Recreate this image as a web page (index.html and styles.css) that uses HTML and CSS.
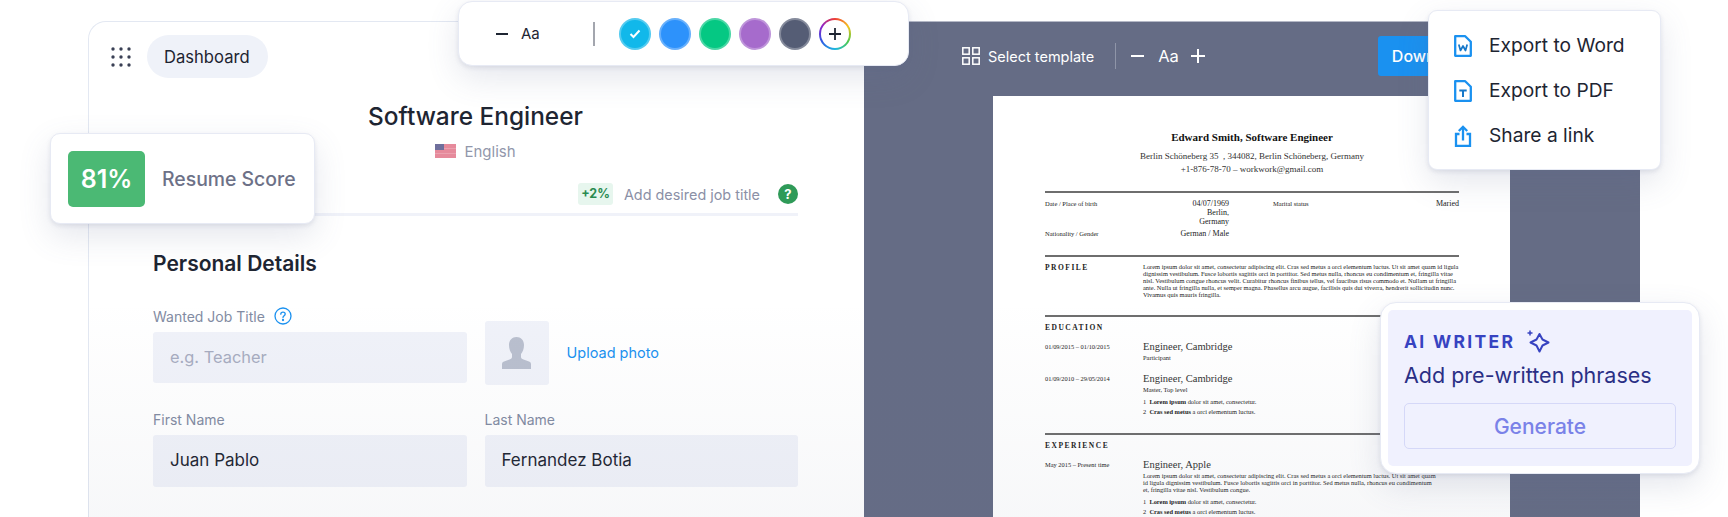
FILE: index.html
```html
<!DOCTYPE html>
<html lang="en">
<head>
    <meta charset="UTF-8">
    <meta name="viewport" content="width=device-width, initial-scale=1.0">
    <title>Resume Builder</title>
    <link rel="stylesheet" href="styles.css">
</head>
<body>
    <div class="stage">
        <div class="window">
            <div class="editor">
                <div class="editor-top">
                    <svg class="menu-icon" width="20" height="20" viewBox="0 0 20 20" fill="#3a4055">
                        <circle cx="2" cy="2" r="1.7"/><circle cx="10" cy="2" r="1.7"/><circle cx="18" cy="2" r="1.7"/>
                        <circle cx="2" cy="10" r="1.7"/><circle cx="10" cy="10" r="1.7"/><circle cx="18" cy="10" r="1.7"/>
                        <circle cx="2" cy="18" r="1.7"/><circle cx="10" cy="18" r="1.7"/><circle cx="18" cy="18" r="1.7"/>
                    </svg>
                    <div class="pill">Dashboard</div>
                </div>
                <h1 class="doc-title">Software Engineer</h1>
                <div class="lang">
                    <svg class="flag" width="21" height="14" viewBox="0 0 21 14">
                        <rect width="21" height="14" fill="#e68a9b"/>
                        <rect y="4" width="21" height="1" fill="#eba1af"/>
                        <rect y="9" width="21" height="1" fill="#eba1af"/>
                        <rect width="9" height="6" fill="#6f6f9c"/>
                    </svg>
                    English
                </div>
                <div class="score-hint">
                    <span class="plus">+2%</span>
                    <span class="hint-text">Add desired job title</span>
                    <span class="hint-q">?</span>
                </div>
                <div class="progress"></div>
                <h2 class="section-title">Personal Details</h2>
                <div class="form-row form-row-first">
                    <div class="field">
                        <div class="label">Wanted Job Title
                            <svg width="18" height="18" viewBox="0 0 18 18" fill="none" stroke="#1a91f0" stroke-width="1.3">
                                <circle cx="9" cy="9" r="8"/>
                                <path d="M6.8 7.2c0-1.3 1-2.1 2.2-2.1s2.2.8 2.2 2c0 1.700-2.200 1.700-2.200 3.500" stroke-linecap="round"/>
                                <circle cx="9" cy="13" r=".5" fill="#1a91f0"/>
                            </svg>
                        </div>
                        <div class="input placeholder">e.g. Teacher</div>
                    </div>
                    <div class="photo-field">
                        <div class="photo">
                            <svg width="29" height="32" viewBox="0 0 29 32" fill="#b9bfce">
                                <path d="M14.500 0c4.300 0 7.500 3 7.500 8 0 3.800-1.300 7-3 9v3c0 1.200.8 2 2.500 2.600l5.500 2c1.500.6 2 1.400 2 2.900V32H0v-4.500c0-1.500.5-2.300 2-2.900l5.500-2C9.200 22 10 21.200 10 20v-3c-1.700-2-3-5.200-3-9 0-5 3.200-8 7.500-8z"/>
                            </svg>
                        </div>
                        <a class="upload" href="#">Upload photo</a>
                    </div>
                </div>
                <div class="form-row form-row-next">
                    <div class="field">
                        <div class="label">First Name</div>
                        <div class="input tall">Juan Pablo</div>
                    </div>
                    <div class="field">
                        <div class="label">Last Name</div>
                        <div class="input tall">Fernandez Botia</div>
                    </div>
                </div>
            </div>

            <div class="preview">
                <div class="preview-bar">
                    <svg class="tpl-icon" width="18" height="18" viewBox="0 0 18 18" fill="none" stroke="#fff" stroke-width="1.5">
                        <rect x=".8" y=".8" width="6.400" height="6.400"/><rect x="10.800" y=".8" width="6.400" height="6.400"/>
                        <rect x=".8" y="10.800" width="6.400" height="6.400"/><rect x="10.800" y="10.800" width="6.400" height="6.400"/>
                    </svg>
                    <span class="tpl-text">Select template</span>
                    <span class="bar-divider"></span>
                    <svg width="14" height="14" viewBox="0 0 14 14" stroke="#fff" stroke-width="2"><path d="M0 7h13"/></svg>
                    <span class="bar-aa">Aa</span>
                    <svg width="14" height="14" viewBox="0 0 14 14" stroke="#fff" stroke-width="2"><path d="M0 7h14M7 0v14"/></svg>
                    <button class="download">Download</button>
                </div>
                <div class="paper">
                    <div class="cv-name">Edward Smith, Software Engineer</div>
                    <div class="cv-contact">Berlin Schöneberg 35&nbsp; , 344082, Berlin Schöneberg, Germany<br>+1-876-78-70 – workwork@gmail.com</div>
                    <div class="cv-rule cv-rule-first"></div>
                    <div class="cv-info">
                        <div class="cv-small">Date / Place of birth</div>
                        <div class="cv-val">04/07/1969<br>Berlin,<br>Germany</div>
                        <div class="cv-small cv-marital">Marital status</div>
                        <div class="cv-val">Maried</div>
                        <div class="cv-small">Nationality / Gender</div>
                        <div class="cv-val">German / Male</div>
                    </div>
                    <div class="cv-rule cv-rule-a"></div>
                    <div class="cv-row cv-profile">
                        <div class="cv-head">PROFILE</div>
                        <div class="cv-para">Lorem ipsum dolor sit amet, consectetur adipiscing elit. Cras sed metus a orci elementum luctus. Ut sit amet quam id ligula<br>dignissim vestibulum. Fusce lobortis sagittis orci in porttitor. Sed metus nulla, rhoncus eu condimentum et, fringilla vitae<br>nisl. Vestibulum congue rhoncus velit. Curabitur rhoncus finibus tellus, vel faucibus risus commodo et. Nullam ut fringilla<br>ante. Nulla ut fringilla nulla, et semper magna. Phasellus arcu augue, facilisis quis dui viverra, hendrerit sollicitudin nunc.<br>Vivamus quis mauris fringilla.</div>
                    </div>
                    <div class="cv-rule cv-rule-b"></div>
                    <div class="cv-head cv-head-alone">EDUCATION</div>
                    <div class="cv-row cv-edu-1">
                        <div class="cv-date">01/09/2015 – 01/10/2015</div>
                        <div>
                            <div class="cv-job">Engineer, Cambridge</div>
                            <div class="cv-sub">Participant</div>
                        </div>
                    </div>
                    <div class="cv-row cv-edu-2">
                        <div class="cv-date">01/09/2010 – 29/05/2014</div>
                        <div>
                            <div class="cv-job">Engineer, Cambridge</div>
                            <div class="cv-sub">Master, Top level</div>
                            <div class="cv-list">1 &nbsp;<b>Lorem ipsum</b> dolor sit amet, consectetur.<br>2 &nbsp;<b>Cras sed metus</b> a orci elementum luctus.</div>
                        </div>
                    </div>
                    <div class="cv-rule cv-rule-c"></div>
                    <div class="cv-head cv-head-alone">EXPERIENCE</div>
                    <div class="cv-row cv-exp">
                        <div class="cv-date">May 2015 – Present time</div>
                        <div>
                            <div class="cv-job">Engineer, Apple</div>
                            <div class="cv-para cv-para-exp">Lorem ipsum dolor sit amet, consectetur adipiscing elit. Cras sed metus a orci elementum luctus. Ut sit amet quam<br>id ligula dignissim vestibulum. Fusce lobortis sagittis orci in porttitor. Sed metus nulla, rhoncus eu condimentum<br>et, fringilla vitae nisl. Vestibulum congue.</div>
                            <div class="cv-list cv-list-exp">1 &nbsp;<b>Lorem ipsum</b> dolor sit amet, consectetur.<br>2 &nbsp;<b>Cras sed metus</b> a orci elementum luctus.</div>
                        </div>
                    </div>
                </div>
            </div>
        </div>

        <div class="fade"></div>

        <div class="popup score-card">
            <div class="score-num">81%</div>
            <div class="score-label">Resume Score</div>
        </div>

        <div class="popup toolbar">
            <svg width="12" height="12" viewBox="0 0 12 12" stroke="#1e2532" stroke-width="2"><path d="M0 6h12"/></svg>
            <span class="toolbar-aa">Aa</span>
            <span class="toolbar-divider"></span>
            <span class="swatch swatch-cyan">
                <svg width="12" height="10" viewBox="0 0 12 10" fill="none" stroke="#fff" stroke-width="2"><path d="M1.500 5l3 3 6-6.500"/></svg>
            </span>
            <span class="swatch swatch-blue"></span>
            <span class="swatch swatch-green"></span>
            <span class="swatch swatch-purple"></span>
            <span class="swatch swatch-slate"></span>
            <span class="swatch swatch-add">
                <svg width="12" height="12" viewBox="0 0 12 12" stroke="#1e2532" stroke-width="1.800"><path d="M0 6h12M6 0v12"/></svg>
            </span>
        </div>

        <div class="popup export">
            <div class="export-item">
                <svg width="18" height="22" viewBox="0 0 18 22" fill="none" stroke="#1a91f0" stroke-width="2.300" stroke-linejoin="round">
                    <path d="M1.200 1.200h10l5.600 5.600v14H1.200z"/>
                    <path d="M4.800 9.500l1.700 6 2.500-4.500 2.500 4.500 1.700-6" stroke-width="1.700" stroke="#1577c9"/>
                </svg>
                Export to Word
            </div>
            <div class="export-item">
                <svg width="18" height="22" viewBox="0 0 18 22" fill="none" stroke="#1a91f0" stroke-width="2.300" stroke-linejoin="round">
                    <path d="M1.200 1.200h10l5.600 5.600v14H1.200z"/>
                    <path d="M5.300 10.500h7.400M9 10.500v6.500" stroke-width="2" stroke="#1577c9"/>
                </svg>
                Export to PDF
            </div>
            <div class="export-item">
                <svg width="18" height="22" viewBox="0 0 18 22" fill="none" stroke="#1a91f0" stroke-width="2.300">
                    <path d="M5.500 9H2v12h14V9h-3.500"/>
                    <path d="M9 15.500V2M4.800 6l4.200-4.200L13.200 6"/>
                </svg>
                Share a link
            </div>
        </div>

        <div class="popup ai-card">
            <div class="ai-inner">
                <div class="ai-head">AI WRITER
                    <svg width="23" height="23" viewBox="0 0 23 23" fill="none" stroke="#3743c1" stroke-width="2" stroke-linejoin="round">
                        <path d="M12.500 4l3 5.500 6 3-6 3-3 6-3-6-6-3 6-3z"/>
                        <path d="M3 .5v5M.5 3h5" stroke-width="1.500"/>
                    </svg>
                </div>
                <div class="ai-text">Add pre-written phrases</div>
                <div class="ai-btn">Generate</div>
            </div>
        </div>
    </div>
</body>
</html>
```

FILE: styles.css
```css
body, html {
    margin: 0;
    padding: 0;
    background-color: white;
    font-family: Inter, "Noto Sans", sans-serif;
    color: #1e2532;
}
.stage {
    position: relative;
    height: 517px;
    overflow: hidden;
    padding: 21px 88px 0;
    box-sizing: border-box;
}
.window {
    display: flex;
    height: 560px;
}

/* left side */
.editor {
    width: 776px;
    box-sizing: border-box;
    padding: 13px 66px 0 64px;
    border: 1px solid #e3e8f2;
    border-right: none;
    border-radius: 18px 0 0 0;
}
.editor-top {
    display: flex;
    align-items: center;
    gap: 16px;
    margin-left: -42px;
}
.menu-icon {
    display: block;
}
.pill {
    background-color: #eff2f9;
    height: 43px;
    padding: 0 18px 0 17px;
    display: flex;
    align-items: center;
    border-radius: 22px;
    font-size: 16.600px;
}
.doc-title {
    margin: 22px 0 0;
    font-size: 24.400px;
    line-height: 32px;
    font-weight: 500;
    text-align: center;
}
.lang {
    margin-top: 9px;
    height: 20px;
    display: flex;
    justify-content: center;
    align-items: center;
    gap: 8px;
    font-size: 15px;
    color: #9297ab;
}
.score-hint {
    margin-top: 22px;
    height: 22px;
    display: flex;
    justify-content: flex-end;
    align-items: center;
    font-size: 14.400px;
    color: #8b90a6;
}
.plus {
    background-color: #e7f6ee;
    color: #2a8a50;
    font-size: 12.500px;
    font-weight: 700;
    line-height: 22px;
    padding: 0 3px;
    border-radius: 3px;
}
.hint-text {
    margin-left: 11px;
}
.hint-q {
    margin-left: 18px;
    width: 20px;
    height: 20px;
    border-radius: 50%;
    background-color: #2f9a58;
    color: white;
    font-size: 13px;
    font-weight: 700;
    display: flex;
    justify-content: center;
    align-items: center;
}
.progress {
    margin-top: 8px;
    height: 3px;
    background-color: #f0f2f9;
}
.section-title {
    margin: 36px 0 0;
    font-size: 21px;
    line-height: 24px;
    font-weight: 600;
}
.form-row {
    display: grid;
    grid-template-columns: 1fr 1fr;
    column-gap: 18px;
}
.form-row-first {
    margin-top: 30px;
}
.form-row-next {
    margin-top: 24px;
}
.label {
    display: flex;
    align-items: center;
    gap: 9px;
    height: 20px;
    font-size: 14px;
    color: #828ba2;
}
.input {
    margin-top: 6px;
    height: 51px;
    box-sizing: border-box;
    background-color: #f0f2f9;
    border-radius: 3px;
    padding: 0 0 2px 17px;
    display: flex;
    align-items: center;
    font-size: 17px;
}
.input.tall {
    height: 52px;
}
.placeholder {
    color: #a7acc0;
    font-size: 16.400px;
}
.photo-field {
    display: flex;
    align-items: center;
    gap: 18px;
    margin-top: 15px;
}
.photo {
    width: 64px;
    height: 64px;
    background-color: #f0f2f9;
    border-radius: 3px;
    display: flex;
    justify-content: center;
    align-items: center;
}
.upload {
    color: #1a91f0;
    font-size: 14.500px;
    text-decoration: none;
    margin-bottom: 2px;
}

/* right side */
.preview {
    flex: 1;
    background-color: #656c85;
    border-top: 1px solid #b4b8c6;
}
.preview-bar {
    height: 74px;
    display: flex;
    align-items: center;
    padding: 0 0 6px 98px;
    box-sizing: border-box;
    color: white;
}
.tpl-text {
    margin-left: 8px;
    font-size: 14.500px;
}
.bar-divider {
    width: 1px;
    height: 26px;
    background-color: #8f95a8;
    margin: 0 15px 0 21px;
}
.bar-aa {
    font-size: 16.500px;
    margin: 0 12px 0 13px;
}
.download {
    margin-left: 173px;
    width: 120px;
    height: 40px;
    border: none;
    border-radius: 3px;
    background-color: #1a91f0;
    color: white;
    font-family: inherit;
    font-size: 16px;
    font-weight: 500;
    text-align: left;
    padding-left: 14px;
}

/* resume sheet */
.paper {
    margin-left: 129px;
    width: 517px;
    height: 470px;
    box-sizing: border-box;
    padding: 34px 51px 0 52px;
    background-color: white;
    font-family: "Liberation Serif", serif;
    color: #222;
}
.cv-name {
    text-align: center;
    font-size: 11px;
    line-height: 14px;
    font-weight: 700;
    color: #111;
}
.cv-contact {
    margin-top: 6px;
    text-align: center;
    font-size: 9px;
    line-height: 13px;
    color: #333;
}
.cv-rule {
    height: 2px;
    background-color: #6e6e6e;
}
.cv-rule-first {
    margin-top: 15px;
}
.cv-info {
    display: grid;
    grid-template-columns: 60px 124px 146px 1fr;
    row-gap: 3px;
    margin-top: 6px;
    font-size: 8px;
    line-height: 9px;
}
.cv-small {
    font-size: 6.500px;
}
.cv-val {
    text-align: right;
}
.cv-marital {
    padding-left: 44px;
}
.cv-rule-a {
    margin-top: 17px;
}
.cv-row {
    display: grid;
    grid-template-columns: 98px 1fr;
}
.cv-profile {
    padding-top: 6px;
}
.cv-head {
    font-size: 7.500px;
    font-weight: 700;
    letter-spacing: 1.500px;
    line-height: 10px;
}
.cv-head-alone {
    margin-top: 6px;
}
.cv-para {
    font-size: 6.400px;
    line-height: 7px;
    white-space: nowrap;
}
.cv-rule-b {
    margin-top: 17px;
}
.cv-edu-1 {
    margin-top: 7px;
}
.cv-edu-2 {
    margin-top: 10px;
}
.cv-date {
    font-size: 6.400px;
    line-height: 13px;
}
.cv-job {
    font-size: 10.500px;
    line-height: 13px;
    color: #333;
}
.cv-sub {
    font-size: 6.400px;
    line-height: 9px;
}
.cv-list {
    margin-top: 3px;
    font-size: 6.400px;
    line-height: 10px;
}
.cv-rule-c {
    margin-top: 16px;
}
.cv-exp {
    margin-top: 7px;
}
.cv-para-exp {
    margin-top: 1px;
}
.cv-list-exp {
    margin-top: 4px;
}

/* slight fade at the bottom of the window */
.fade {
    position: absolute;
    left: 88px;
    right: 88px;
    top: 300px;
    bottom: 0;
    background: linear-gradient(rgba(100,110,140,0), rgba(100,110,140,0.05));
    pointer-events: none;
}

/* things floating over the window */
.popup {
    position: absolute;
    box-sizing: border-box;
    background-color: white;
    border: 1px solid #e7eaf4;
    box-shadow: 0 12px 32px rgba(96,108,140,0.16), 0 2px 4px rgba(96,108,140,0.14);
}
.score-card {
    left: 50px;
    top: 133px;
    width: 265px;
    height: 91px;
    border-radius: 10px;
    padding-left: 17px;
    display: flex;
    align-items: center;
}
.score-num {
    width: 77px;
    height: 56px;
    background-color: #4bb974;
    border-radius: 5px;
    color: white;
    font-size: 25px;
    font-weight: 600;
    display: flex;
    justify-content: center;
    align-items: center;
}
.score-label {
    margin-left: 17px;
    font-size: 19.400px;
    font-weight: 500;
    color: #6d7187;
}
.toolbar {
    left: 458px;
    top: 1px;
    width: 451px;
    height: 65px;
    border-radius: 14px;
    padding-left: 37px;
    display: flex;
    align-items: center;
}
.toolbar-aa {
    margin-left: 13px;
    font-size: 15px;
    width: 20px;
}
.toolbar-divider {
    width: 2px;
    height: 24px;
    background-color: #a3a6ae;
    margin: 0 24px 0 52px;
}
.swatch {
    width: 32px;
    height: 32px;
    box-sizing: border-box;
    margin-right: 8px;
    border-radius: 50%;
    border: 2.500px solid rgba(255,255,255,0.28);
    display: flex;
    justify-content: center;
    align-items: center;
}
.swatch-cyan { background-color: #11b8ea; }
.swatch-blue { background-color: #2d92fb; }
.swatch-green { background-color: #05c883; }
.swatch-purple { background-color: #a66bcc; }
.swatch-slate { background-color: #555d75; }
.swatch-add {
    border: 2px solid transparent;
    background: linear-gradient(white, white) padding-box,
        conic-gradient(#ef3e36, #f5c21c, #4cc94c, #1eb7e0, #2d5be3, #8c1fc9, #ef3e36) border-box;
}
.export {
    left: 1428px;
    top: 10px;
    width: 233px;
    height: 160px;
    border-radius: 9px;
    padding: 11px 0 0 25px;
}
.export-item {
    height: 45px;
    display: flex;
    align-items: center;
    gap: 17px;
    font-size: 19.200px;
}
.export-item svg {
    margin-top: 2px;
}
.ai-card {
    left: 1380px;
    top: 302px;
    width: 320px;
    height: 172px;
    border-radius: 16px;
    padding: 7px;
}
.ai-inner {
    height: 100%;
    box-sizing: border-box;
    padding: 20px 16px 0;
    background-color: #f0f1fe;
    border-radius: 5px;
}
.ai-head {
    display: flex;
    align-items: center;
    gap: 12px;
    font-size: 17.500px;
    font-weight: 700;
    letter-spacing: 2.300px;
    color: #3743c1;
}
.ai-text {
    margin-top: 7px;
    font-size: 21.500px;
    line-height: 30px;
    color: #2a2f85;
}
.ai-btn {
    margin-top: 13px;
    height: 46px;
    width: 272px;
    box-sizing: border-box;
    border: 1px solid #d5d8f8;
    border-radius: 5px;
    display: flex;
    justify-content: center;
    align-items: center;
    font-size: 21px;
    font-weight: 500;
    color: #7a82e8;
}
```
